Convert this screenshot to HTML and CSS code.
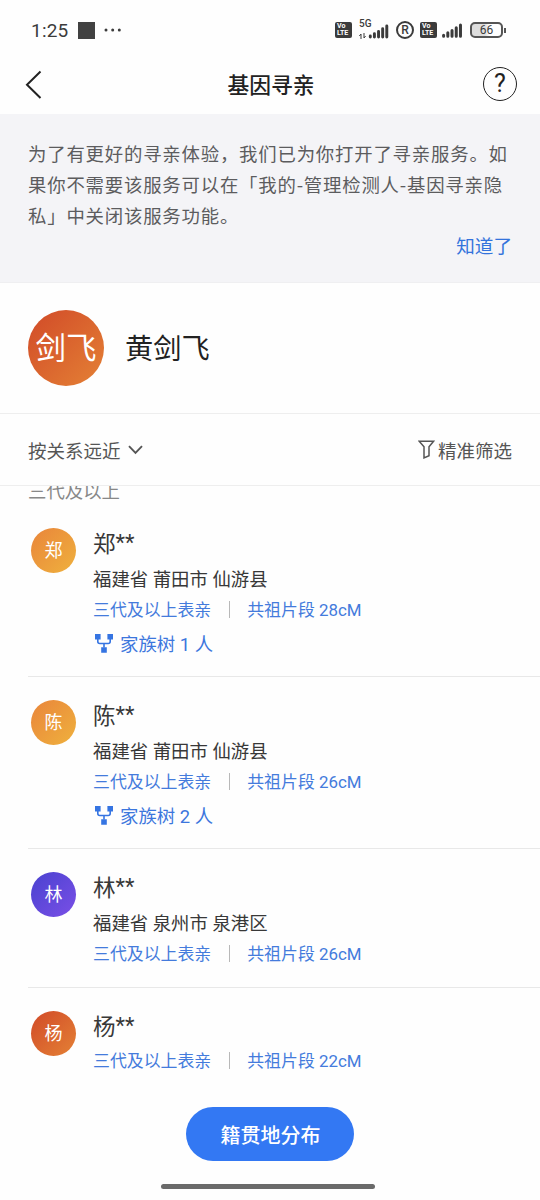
FILE: index.html
```html
<!DOCTYPE html>
<html lang="zh-CN">
<head>
<meta charset="utf-8">
<meta name="viewport" content="width=device-width, initial-scale=1">
<title>基因寻亲</title>
<link rel="stylesheet" href="styles.css">
</head>
<body>
<svg class="defs" width="0" height="0">
  <defs>
    <symbol id="tree" viewBox="0 0 20 20"><path d="M1 1h5.6v5.6H1zM13.4 1H19v5.6h-5.6zM7.2 14.2h5.6v5.6H7.2z" fill="#3574e2"/><path d="M3.8 6v2.5q0 2 2 2h8.4q2 0 2-2V6M10 10.5v4" fill="none" stroke="#3574e2" stroke-width="1.6"/></symbol>
    <symbol id="bars" viewBox="0 0 24 16"><path d="M2.5 14v-1M7 14v-3.500M11.500 14V8M16 14V5M20.500 14V2" fill="none" stroke="#3b3b3b" stroke-width="3.200" stroke-linecap="round"/></symbol>
  </defs>
</svg>
<div class="screen">
  <header class="status">
    <span class="time">1:25</span>
    <span class="square"></span>
    <svg class="dots" width="18" height="4" viewBox="0 0 18 4"><g fill="#3b3b3b"><circle cx="2" cy="2" r="1.5"/><circle cx="8.7" cy="2" r="1.5"/><circle cx="15.3" cy="2" r="1.5"/></g></svg>
    <div class="signals">
      <span class="volte"><b>Vo</b><b>LTE</b></span>
      <span class="cell"><span class="fiveg">5G</span><svg class="updown" width="7" height="6" viewBox="0 0 7 6"><path d="M2 6V1L.3 3M5 0v5l1.6-2" fill="none" stroke="#3b3b3b"/></svg><svg class="bars" width="22" height="15"><use href="#bars"/></svg></span>
      <span class="roam">R</span>
      <span class="volte"><b>Vo</b><b>LTE</b></span>
      <svg class="bars-b" width="23" height="15"><use href="#bars"/></svg>
      <span class="battery">66</span><span class="nub"></span>
    </div>
  </header>
  <nav class="nav">
    <svg width="18" height="30" viewBox="0 0 18 30"><path d="M15.500 2.500 2 15.800 15.500 29" fill="none" stroke="#222" stroke-width="2"/></svg>
    <h1>基因寻亲</h1>
    <span class="help">?</span>
  </nav>
  <section class="notice">
    <p>为了有更好的寻亲体验，我们已为你打开了寻亲服务。如<br>果你不需要该服务可以在「我的-管理检测人-基因寻亲隐<br>私」中关闭该服务功能。</p>
    <a class="ok">知道了</a>
  </section>
  <section class="profile">
    <span class="avatar-lg red">剑飞</span>
    <span class="me">黄剑飞</span>
  </section>
  <section class="filters">
    <span>按关系远近</span>
    <svg class="chev" width="15" height="10" viewBox="0 0 15 10"><path d="m1 1.2 6.5 6.6L14 1.2" fill="none" stroke="#555" stroke-width="1.9"/></svg>
    <svg class="funnel" width="17" height="19" viewBox="0 0 17 19"><path d="M1.2 1.2h14.4L11 6.800v8.900l-5 2.2V6.800z" fill="none" stroke="#555" stroke-width="1.5"/></svg>
    <span>精准筛选</span>
  </section>
  <main class="list">
    <div class="group">三代及以上</div>
    <article class="row">
      <span class="avatar amber">郑</span>
      <div class="info">
        <div class="name">郑<span class="mask">**</span></div>
        <div class="place">福建省 莆田市 仙游县</div>
        <div class="rel"><span>三代及以上表亲</span><i></i><span>共祖片段 28cM</span></div>
        <div class="family"><svg width="20" height="20"><use href="#tree"/></svg>家族树 1 人</div>
      </div>
    </article>
    <article class="row">
      <span class="avatar amber">陈</span>
      <div class="info">
        <div class="name">陈<span class="mask">**</span></div>
        <div class="place">福建省 莆田市 仙游县</div>
        <div class="rel"><span>三代及以上表亲</span><i></i><span>共祖片段 26cM</span></div>
        <div class="family"><svg width="20" height="20"><use href="#tree"/></svg>家族树 2 人</div>
      </div>
    </article>
    <article class="row short">
      <span class="avatar violet">林</span>
      <div class="info">
        <div class="name">林<span class="mask">**</span></div>
        <div class="place">福建省 泉州市 泉港区</div>
        <div class="rel"><span>三代及以上表亲</span><i></i><span>共祖片段 26cM</span></div>
      </div>
    </article>
    <article class="row last">
      <span class="avatar red">杨</span>
      <div class="info">
        <div class="name">杨<span class="mask">**</span></div>
        <div class="rel"><span>三代及以上表亲</span><i></i><span>共祖片段 22cM</span></div>
      </div>
    </article>
  </main>
  <footer class="bottom">
    <button class="cta">籍贯地分布</button>
    <span class="home"></span>
  </footer>
</div>
</body>
</html>
```

FILE: styles.css
```css
* { box-sizing: border-box; }
body { margin: 0; background: #fefefe; font-family: Roboto, "Noto Sans CJK SC", sans-serif; color: #333; }
.defs { display: block; }
.screen { width: 540px; height: 1200px; display: flex; flex-direction: column; overflow: hidden; white-space: nowrap; }

.status { height: 60px; flex: none; display: flex; align-items: center; padding: 0 34px 0 31px; color: #3b3b3b; }
.time { font-size: 19px; line-height: 24px; letter-spacing: .2px; width: 47px; padding-top: 1px; }
.square { width: 17px; height: 17px; background: #414141; }
.dots { margin-left: 9px; }
.signals { margin-left: auto; display: flex; align-items: center; }
.volte { width: 17px; height: 16px; border-radius: 2px; background: #3b3b3b; color: #fff; font-size: 7px; line-height: 7px; padding: 1px 0 0 2px; display: flex; flex-direction: column; }
.volte b { height: 7px; }
.cell { display: grid; grid-template-columns: 9px 22px; width: 31px; height: 20px; margin: -3px 0 0 7px; align-items: end; }
.fiveg { grid-column: 1; grid-row: 1; align-self: start; font-size: 10px; line-height: 10px; font-weight: 500; }
.updown { grid-column: 1; grid-row: 1; }
.bars { grid-column: 2; grid-row: 1; }
.roam { width: 18px; height: 18px; border: 2px solid #3b3b3b; border-radius: 50%; font-size: 12px; line-height: 14px; font-weight: 500; text-align: center; margin: 0 6px 0 6px; }
.bars-b { margin: 0 6px 0 4px; }
.battery { width: 33px; height: 16px; border: 2px solid #555; border-radius: 5px; font-size: 12px; line-height: 13px; text-align: center; background: linear-gradient(90deg, #ddd 45%, #fefefe 60%); }
.nub { width: 2px; height: 5px; margin-left: 1px; background: #555; }

.nav { height: 54px; flex: none; display: grid; grid-template-columns: 34px 1fr 34px; align-items: center; padding: 0 23px 6px 25px; }
.nav h1 { margin: 0; padding-top: 3px; text-align: center; font-size: 21.8px; line-height: 30px; font-weight: 500; color: #222; }
.help { width: 34px; height: 34px; border: 1.5px solid #222; border-radius: 50%; font-size: 25px; line-height: 31px; text-align: center; color: #222; }

.notice { height: 169px; flex: none; background: #f4f4f7; border-bottom: 1px solid #efeff1; padding: 24px 28px 0; color: #5c5c5e; display: flex; flex-direction: column; }
.notice p { margin: 0; font-family: "Noto Sans CJK SC", sans-serif; font-size: 18.4px; line-height: 31px; letter-spacing: .8px; }
.ok { align-self: flex-end; margin-top: 1px; font-size: 18.6px; line-height: 31px; color: #3373dc; }

.profile { height: 131px; flex: none; display: flex; align-items: center; padding: 0 28px; border-bottom: 1px solid #eee; }
.avatar-lg { width: 76px; height: 76px; border-radius: 50%; color: #fff; font-size: 30.5px; line-height: 78px; display: flex; justify-content: center; }
.me { margin-left: 21px; padding-top: 4px; font-size: 28.2px; color: #222; line-height: 40px; }
.filters { height: 72px; flex: none; display: flex; align-items: center; padding: 0 28px; border-bottom: 1px solid #eee; font-size: 18.5px; color: #555; }
.chev { margin-left: 7px; }
.funnel { margin: 0 3px 0 auto; }

.list { flex: 1; min-height: 0; overflow: hidden; }
.group { height: 28px; margin-top: -9px; padding-left: 28px; font-size: 18.4px; line-height: 29px; color: #888; }
.row { height: 172px; margin-left: 28px; padding: 23px 0 0 3px; display: flex; align-items: flex-start; border-bottom: 1px solid #e8e8e8; }
.row.short { height: 139px; }
.row.last { height: 112px; border: 0; }
.avatar { width: 45px; height: 45px; border-radius: 50%; color: #fff; font-size: 18px; line-height: 46px; text-align: center; }
.red { background: linear-gradient(135deg, #d14a28, #e48135); }
.amber { background: linear-gradient(135deg, #e9853b, #efb13d); }
.violet { background: linear-gradient(135deg, #4942d0, #7a4fe6); }
.info { margin-left: 17px; }
.name { height: 32px; font-size: 22.5px; line-height: 32px; color: #383838; }
.mask { font-size: 22px; line-height: 1; vertical-align: 2px; }
.place { font-size: 18.4px; line-height: 28px; margin-top: 6px; color: #383838; }
.rel { font-size: 16.9px; line-height: 24px; margin-top: 4px; color: #447bdc; display: flex; align-items: center; }
.row.last .rel { margin-top: 6px; }
.rel i { width: 1px; height: 17px; margin: -2px 17px 0 18px; background: #b8b8b8; }
.family { font-size: 18.4px; line-height: 28px; margin-top: 9px; color: #3c76dd; display: flex; align-items: center; gap: 7px; }
.family svg { margin: -4px -1px 0 1px; }

.bottom { flex: none; height: 110px; padding-top: 17px; display: flex; flex-direction: column; align-items: center; }
.cta { width: 168px; height: 54px; border: 0; border-radius: 27px; background: #3378f3; color: #fff; font: 500 20px/54px Roboto, "Noto Sans CJK SC", sans-serif; padding: 2px 0 0 1px; }
.home { width: 214px; height: 5px; border-radius: 3px; background: #6a6a6a; margin: 23px 0 0 -4px; }
```
